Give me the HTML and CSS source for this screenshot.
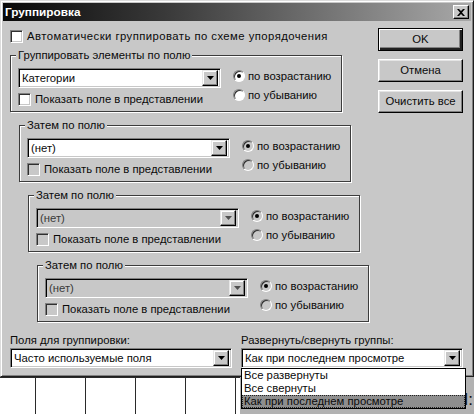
FILE: index.html
```html
<!DOCTYPE html>
<html lang="ru">
<head>
<meta charset="utf-8">
<title>Группировка</title>
<link rel="stylesheet" href="styles.css">
</head>
<body>
<div class="win">
  <div class="title">
    <span class="title-text">Группировка</span>
    <span class="close"><svg width="8" height="7" viewBox="0 0 8 7"><path d="M0 0h2l2 2 2-2h2L5 3.5 8 7H6L4 5 2 7H0l3-3.5z" fill="#000"/></svg></span>
  </div>
  <div class="client">
    <div class="top">
      <div class="left">
        <div class="chk auto"><span class="box"></span><span class="auto-text">Автоматически группировать по схеме упорядочения</span></div>

        <fieldset class="grp g1">
          <legend>Группировать элементы по полю</legend>
          <div class="grow">
            <div class="fcol">
              <div class="combo"><span class="val">Категории</span><span class="dd"><svg width="7" height="4" viewBox="0 0 7 4"><path d="M0 0h7L3.5 4z"/></svg></span></div>
              <div class="chk"><span class="box"></span><span>Показать поле в представлении</span></div>
            </div>
            <div class="radios">
              <div class="radio on"><span class="circ"></span><span>по возрастанию</span></div>
              <div class="radio"><span class="circ"></span><span>по убыванию</span></div>
            </div>
          </div>
        </fieldset>

        <fieldset class="grp g2 dis-chk">
          <legend>Затем по полю</legend>
          <div class="grow">
            <div class="fcol">
              <div class="combo"><span class="val">(нет)</span><span class="dd"><svg width="7" height="4" viewBox="0 0 7 4"><path d="M0 0h7L3.5 4z"/></svg></span></div>
              <div class="chk"><span class="box"></span><span>Показать поле в представлении</span></div>
            </div>
            <div class="radios">
              <div class="radio on"><span class="circ"></span><span>по возрастанию</span></div>
              <div class="radio"><span class="circ"></span><span>по убыванию</span></div>
            </div>
          </div>
        </fieldset>

        <fieldset class="grp g3 dis-chk">
          <legend>Затем по полю</legend>
          <div class="grow">
            <div class="fcol">
              <div class="combo disabled"><span class="val">(нет)</span><span class="dd"><svg width="7" height="4" viewBox="0 0 7 4"><path d="M0 0h7L3.5 4z"/></svg></span></div>
              <div class="chk"><span class="box"></span><span>Показать поле в представлении</span></div>
            </div>
            <div class="radios">
              <div class="radio on"><span class="circ"></span><span>по возрастанию</span></div>
              <div class="radio"><span class="circ"></span><span>по убыванию</span></div>
            </div>
          </div>
        </fieldset>

        <fieldset class="grp g4 dis-chk">
          <legend>Затем по полю</legend>
          <div class="grow">
            <div class="fcol">
              <div class="combo disabled"><span class="val">(нет)</span><span class="dd"><svg width="7" height="4" viewBox="0 0 7 4"><path d="M0 0h7L3.5 4z"/></svg></span></div>
              <div class="chk"><span class="box"></span><span>Показать поле в представлении</span></div>
            </div>
            <div class="radios">
              <div class="radio on"><span class="circ"></span><span>по возрастанию</span></div>
              <div class="radio"><span class="circ"></span><span>по убыванию</span></div>
            </div>
          </div>
        </fieldset>
      </div>

      <div class="buttons">
        <div class="btn default">OK</div>
        <div class="btn">Отмена</div>
        <div class="btn">Очистить все</div>
      </div>
    </div>

    <div class="bottom">
      <div class="bcol">
        <div class="blabel">Поля для группировки:</div>
        <div class="combo wide"><span class="val">Часто используемые поля</span><span class="dd"><svg width="7" height="4" viewBox="0 0 7 4"><path d="M0 0h7L3.5 4z"/></svg></span></div>
      </div>
      <div class="bcol">
        <div class="blabel">Развернуть/свернуть группы:</div>
        <div class="combo wide open"><span class="val">Как при последнем просмотре</span><span class="dd"><svg width="7" height="4" viewBox="0 0 7 4"><path d="M0 0h7L3.5 4z"/></svg></span>
          <div class="list">
            <div class="item">Все развернуты</div>
            <div class="item">Все свернуты</div>
            <div class="item sel">Как при последнем просмотре</div>
          </div>
        </div>
      </div>
    </div>
  </div>
</div>
<div class="desk">
  <div class="grid">
    <div class="cell first"></div>
    <div class="cell"></div>
    <div class="cell"></div>
    <div class="cell"></div>
    <div class="cell"></div>
  </div>
  <div class="behind"><span class="frag">И:</span></div>
</div>
</body>
</html>
```
FILE: styles.css
```css
* { box-sizing: border-box; }
html, body { margin: 0; padding: 0; }
body {
  width: 474px;
  height: 414px;
  overflow: hidden;
  background: #b0b0b0;
  font-family: "Liberation Sans", Arial, sans-serif;
  font-size: 11.3px;
  line-height: 13px;
  color: #0a0a0a;
}

.win {
  width: 474px;
  height: 377px;
  background: #c8c8c8;
  border: 1px solid;
  border-color: #dcdcdc #1e1e1e #1e1e1e #dcdcdc;
  box-shadow: inset 1px 1px #fff, inset -1px -1px #808080;
  padding: 2px;
  display: flex;
  flex-direction: column;
}

.title {
  height: 18px;
  display: flex;
  align-items: center;
  padding: 0 2px 0 2px;
  background: linear-gradient(to right, #080808 0%, #3a3a3a 35%, #a8a8a8 100%);
  color: #fff;
}
.title-text {
  flex: 1;
  font-weight: bold;
  font-size: 11.8px;
}
.close {
  width: 16px;
  height: 14px;
  background: #c8c8c8;
  border: 1px solid;
  border-color: #fff #000 #000 #fff;
  box-shadow: inset -1px -1px #808080;
  display: flex;
  align-items: center;
  justify-content: center;
}
.close svg { display: block; }

.client {
  flex: 1;
  display: flex;
  flex-direction: column;
  padding: 0 8px 0 7px;
}
.top { display: flex; }
.left { width: 368px; }

/* checkbox */
.chk {
  display: flex;
  align-items: center;
  height: 13px;
  gap: 4px;
  white-space: nowrap;
}
.chk .box {
  width: 13px;
  height: 13px;
  flex: none;
  background: #fff;
  border: 1px solid;
  border-color: #808080 #fff #fff #808080;
  box-shadow: inset 1px 1px #303030, inset -1px -1px #c8c8c8;
}
.dis-chk .chk .box { background: #c8c8c8; }
.auto { margin-top: 9px; }
.auto-text { letter-spacing: 0.45px; }

/* group boxes */
.grp {
  width: 332px;
  margin: 6px 0 0 0;
  padding: 6px 0 5px 7px;
  border: 1px solid #3c3c3c;
  box-shadow: 1px 1px 0 #fff, inset 1px 1px 0 #fff;
  min-inline-size: 0;
}
.grp legend {
  padding: 0 2px;
  margin-left: -2px;
  line-height: 13px;
  background: #c8c8c8;
  white-space: nowrap;
}
.g2 { margin-left: 9px; margin-top: 7px; }
.g3 { margin-left: 18px; margin-top: 7px; }
.g4 { margin-left: 27px; margin-top: 7px; }

.grow { display: flex; }
.fcol {
  display: flex;
  flex-direction: column;
  gap: 5px;
}
.radios {
  display: flex;
  flex-direction: column;
  gap: 5px;
  margin-left: 12px;
  padding-top: 1px;
}

/* radio */
.radio {
  display: flex;
  align-items: center;
  height: 14px;
  gap: 3px;
  white-space: nowrap;
}
.radio .circ {
  width: 12px;
  height: 12px;
  flex: none;
  border-radius: 50%;
  background: #fff;
  border: 1px solid;
  border-color: #808080 #fff #fff #808080;
  box-shadow: inset 1px 1px #303030;
  display: flex;
  align-items: center;
  justify-content: center;
}
.dis-chk .radio .circ { background: #c8c8c8; }
.radio.on .circ::after {
  content: "";
  width: 4px;
  height: 4px;
  border-radius: 50%;
  background: #000;
}

/* combo */
.combo {
  width: 203px;
  height: 20px;
  background: #fff;
  border: 1px solid;
  border-color: #808080 #fff #fff #808080;
  box-shadow: inset 1px 1px #000, inset -1px -1px #c8c8c8;
  display: flex;
  align-items: center;
  padding: 2px 2px 2px 2px;
  position: relative;
}
.combo .val {
  flex: 1;
  padding-left: 1px;
  white-space: nowrap;
}
.combo .dd {
  width: 16px;
  height: 16px;
  flex: none;
  background: #c8c8c8;
  border: 1px solid;
  border-color: #e8e8e8 #000 #000 #e8e8e8;
  box-shadow: inset -1px -1px #808080, inset 1px 1px #fff;
  display: flex;
  align-items: center;
  justify-content: center;
}
.combo .dd svg { display: block; fill: #000; }
.combo.disabled { background: #c8c8c8; }
.combo.disabled .val { color: #3a3a3a; }
.combo.disabled .dd svg { fill: #505050; }

/* buttons */
.buttons {
  margin-left: auto;
  margin-top: 7px;
  display: flex;
  flex-direction: column;
  gap: 8px;
}
.btn {
  width: 85px;
  height: 23px;
  display: flex;
  align-items: center;
  justify-content: center;
  background: #c8c8c8;
  border: 1px solid;
  border-color: #fff #000 #000 #fff;
  box-shadow: inset -1px -1px #808080, inset 1px 1px #e4e4e4;
  white-space: nowrap;
}
.btn.default {
  border: 1px solid #000;
  box-shadow: inset 1px 1px #fff, inset -2px -2px #202020, inset -3px -3px #808080;
}

/* bottom */
.bottom {
  display: flex;
  gap: 9px;
  margin-top: 12px;
}
.bcol { width: 222px; }
.blabel { height: 13px; margin-bottom: 1px; white-space: nowrap; }
.combo.wide { width: 222px; }
.combo.open { z-index: 2; }

.list {
  position: absolute;
  left: -1px;
  top: 19px;
  width: 225px;
  height: 41px;
  background: #fff;
  border: 1px solid #000;
  padding: 0;
}
.list .item {
  height: 13px;
  line-height: 13px;
  padding-left: 2px;
  white-space: nowrap;
}
.list .item.sel {
  background: #8e8e8e;
  outline: 1px dotted #222;
  outline-offset: -1px;
}

/* background below dialog */
.desk {
  display: flex;
  height: 37px;
}
.grid {
  width: 240px;
  display: flex;
  background: #fff;
  border-top: 1px solid #2a2a2a;
}
.cell {
  width: 50px;
  flex: none;
  border-right: 1px solid #2a2a2a;
}
.cell.first { width: 36px; }
.behind {
  flex: 1;
  background: #b2b2b2;
  display: flex;
  justify-content: flex-end;
  align-items: flex-start;
  overflow: hidden;
}
.frag {
  font-size: 17px;
  line-height: 20px;
  margin-top: 13px;
  margin-right: 1px;
  color: #111;
}
```
